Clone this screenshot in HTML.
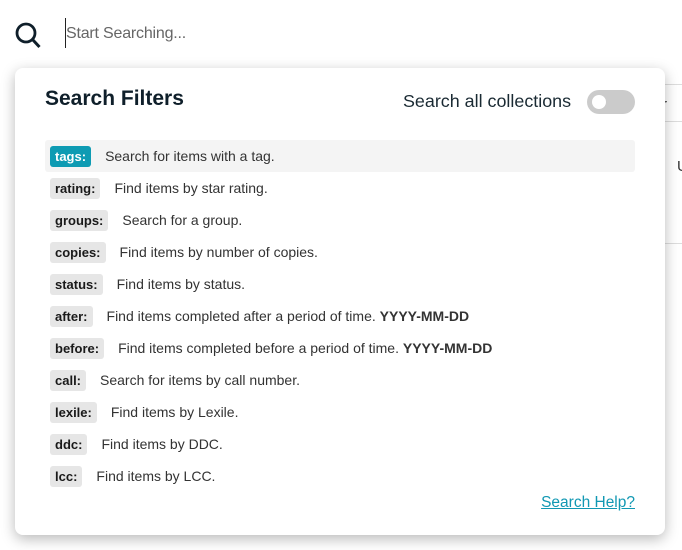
<!DOCTYPE html>
<html><head><style>
body{margin:0;width:682px;height:550px;background:#fff;font-family:"Liberation Sans",sans-serif;position:relative;overflow:hidden;color:#222}
.bg{position:absolute;left:640px;top:84px;width:42px;height:1px;background:#ddd}
.panel{position:absolute;left:15px;top:68px;width:650px;height:467px;background:#fff;border-radius:8px;box-shadow:0 4px 14px rgba(0,0,0,.28)}
h1{position:absolute;left:30px;top:19px;margin:0;font-size:21px;font-weight:bold;color:#0f1f2a}
.sac{position:absolute;left:388px;top:23px;font-size:17.9px;color:#1a2a33}
.tog{position:absolute;left:572px;top:22px;width:48px;height:24px;border-radius:12px;background:#cbcbcb}
.tog:after{content:"";position:absolute;left:5px;top:5px;width:14px;height:14px;border-radius:50%;background:#fff}
.row{position:absolute;left:30px;width:590px;height:32px;display:flex;align-items:center;font-size:14px;color:#333}
.row.hl{background:#f4f4f4;border-radius:3px}
.chip{margin-left:5px;background:#e6e6e6;border-radius:3px;padding:3px 5px;font-weight:bold;color:#1a1a1a;margin-right:14px;line-height:15px;font-size:13px}
.hl .chip{background:#0e9bb3;color:#fff}
a{position:absolute;right:30px;top:426px;font-size:15.5px;color:#1198b3}
</style></head><body>
<svg style="position:absolute;left:13px;top:19px" width="30" height="32" viewBox="0 0 30 32"><circle cx="13" cy="14" r="9" fill="none" stroke="#0f1f2a" stroke-width="2.8"/><line x1="19.5" y1="20.5" x2="26.5" y2="28" stroke="#0f1f2a" stroke-width="3"/></svg>
<div style="position:absolute;left:65px;top:18px;width:1px;height:30px;background:#222"></div>
<div style="position:absolute;left:66px;top:25px;font-size:16px;color:#666;letter-spacing:-0.2px">Start Searching...</div>
<div class="bg"></div><div class="bg" style="top:121px"></div><div class="bg" style="top:243px"></div>
<div style="position:absolute;left:662px;top:96px;font-size:15px;color:#333">r</div>
<div style="position:absolute;left:677px;top:158px;font-size:15px;color:#333">U</div>
<div class="panel">
<h1>Search Filters</h1>
<div class="sac">Search all collections</div><div class="tog"></div>
<div class="row hl" style="top:72px"><span class="chip">tags:</span>Search for items with a tag.</div>
<div class="row" style="top:104px"><span class="chip">rating:</span>Find items by star rating.</div>
<div class="row" style="top:136px"><span class="chip">groups:</span>Search for a group.</div>
<div class="row" style="top:168px"><span class="chip">copies:</span>Find items by number of copies.</div>
<div class="row" style="top:200px"><span class="chip">status:</span>Find items by status.</div>
<div class="row" style="top:232px"><span class="chip">after:</span>Find items completed after a period of time.&nbsp;<b>YYYY-MM-DD</b></div>
<div class="row" style="top:264px"><span class="chip">before:</span>Find items completed before a period of time.&nbsp;<b>YYYY-MM-DD</b></div>
<div class="row" style="top:296px"><span class="chip">call:</span>Search for items by call number.</div>
<div class="row" style="top:328px"><span class="chip">lexile:</span>Find items by Lexile.</div>
<div class="row" style="top:360px"><span class="chip">ddc:</span>Find items by DDC.</div>
<div class="row" style="top:392px"><span class="chip">lcc:</span>Find items by LCC.</div>
<a href="#">Search Help?</a>
</div>
</body></html>
